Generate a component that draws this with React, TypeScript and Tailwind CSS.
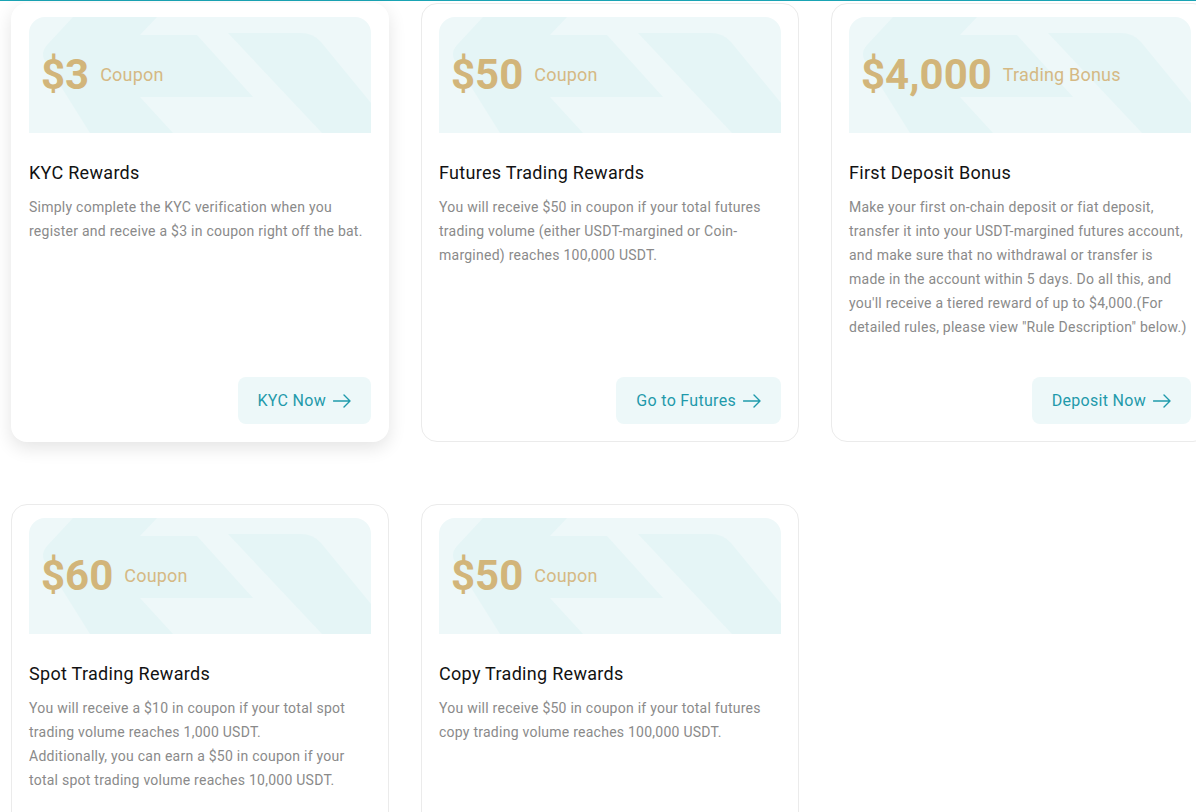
type Reward = {
    amount: string;
    label: string;
    title: string;
    desc: string[];
    action?: string;
    active?: boolean;
};

const rewards: Reward[] = [
    {
        amount: "$3",
        label: "Coupon",
        title: "KYC Rewards",
        desc: ["Simply complete the KYC verification when you register and receive a $3 in coupon right off the bat."],
        action: "KYC Now",
        active: true,
    },
    {
        amount: "$50",
        label: "Coupon",
        title: "Futures Trading Rewards",
        desc: [
            "You will receive $50 in coupon if your total futures trading volume (either USDT-margined or Coin-margined) reaches 100,000 USDT.",
        ],
        action: "Go to Futures",
    },
    {
        amount: "$4,000",
        label: "Trading Bonus",
        title: "First Deposit Bonus",
        desc: [
            'Make your first on-chain deposit or fiat deposit, transfer it into your USDT-margined futures account, and make sure that no withdrawal or transfer is made in the account within 5 days. Do all this, and you\'ll receive a tiered reward of up to $4,000.(For detailed rules, please view "Rule Description" below.)',
        ],
        action: "Deposit Now",
    },
    {
        amount: "$60",
        label: "Coupon",
        title: "Spot Trading Rewards",
        desc: [
            "You will receive a $10 in coupon if your total spot trading volume reaches 1,000 USDT.",
            "Additionally, you can earn a $50 in coupon if your total spot trading volume reaches 10,000 USDT.",
        ],
    },
    {
        amount: "$50",
        label: "Coupon",
        title: "Copy Trading Rewards",
        desc: ["You will receive $50 in coupon if your total futures copy trading volume reaches 100,000 USDT."],
    },
];

function BannerBg() {
    return (
        <svg className="absolute inset-0 h-full w-full" viewBox="0 0 342 116" preserveAspectRatio="none">
            <rect width="342" height="116" fill="#eef8f9" />
            <path
                d="M44 0 L128 0 L111 18 L168 18 L224 80 L111 80 L144 116 L61 116 L16 44 Q11 36 18 28 Z"
                fill="#e5f5f6"
            />
            <path d="M199 16 L272 16 Q284 16 292 25 L342 86 L342 116 L293 116 Z" fill="#e5f5f6" />
        </svg>
    );
}

function Arrow() {
    return (
        <svg width="18" height="14" viewBox="0 0 18 14" fill="none" stroke="currentColor" strokeWidth="1.4">
            <path d="M0.5 7 H17 M11 1 L17 7 L11 13" strokeLinecap="round" strokeLinejoin="round" />
        </svg>
    );
}

function RewardCard({ r }: { r: Reward }) {
    return (
        <div
            className={
                r.active
                    ? "flex h-[439px] flex-col rounded-2xl bg-white px-[18px] pt-[14px] pb-[18px] shadow-[0_6px_18px_rgba(0,0,0,0.11)]"
                    : "flex h-[439px] flex-col rounded-2xl border border-[#ebebeb] bg-white px-[17px] pt-[13px] pb-[17px]"
            }
        >
            <div className="relative h-[116px] overflow-hidden rounded-t-2xl">
                <BannerBg />
                <div className="relative flex h-full items-center pl-3">
                    <span className="text-[42px] leading-none font-bold text-[#d2b57a]">{r.amount}</span>
                    <span className="ml-[11px] text-lg tracking-[0.2px] text-[#d5b984]">{r.label}</span>
                </div>
            </div>
            <h3 className="mt-[27px] text-lg leading-[26px] tracking-[0.3px] text-[#121212]">{r.title}</h3>
            <div className="mt-[9px] text-sm leading-6 tracking-[0.25px] text-[#8a8a8a]">
                {r.desc.map((d, i) => (
                    <p key={i}>{d}</p>
                ))}
            </div>
            {r.action && (
                <div className="mt-auto flex justify-end">
                    <button className="flex h-[47px] items-center gap-[7px] rounded-lg bg-[#edf8f9] px-5 text-base tracking-[0.3px] text-[#1f9aab]">
                        {r.action}
                        <Arrow />
                    </button>
                </div>
            )}
        </div>
    );
}

export default function App() {
    return (
        <div className="h-[812px] w-[1196px] overflow-hidden bg-white font-['Roboto',sans-serif]">
            <div className="h-px bg-[#1aa4b4]" />
            <div className="grid w-[1240px] grid-cols-[378px_378px_378px] gap-x-8 gap-y-[62px] pt-[2px] pl-[11px]">
                {rewards.map((r, i) => (
                    <RewardCard key={i} r={r} />
                ))}
            </div>
        </div>
    );
}
